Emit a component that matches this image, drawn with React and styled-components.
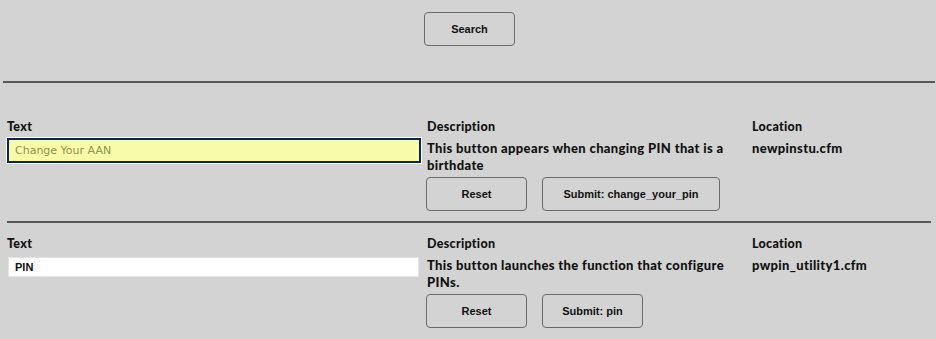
import React from "react";
import styled, { createGlobalStyle } from "styled-components";

const Global = createGlobalStyle`
  html, body { margin: 0; padding: 0; background: #d3d3d3; overflow: hidden; }
  body { font-family: "Liberation Sans", Arial, sans-serif; }
`;

const Page = styled.div`
  background: #d3d3d3;
  min-height: 339px;
  padding-top: 12px;
`;

const Top = styled.div`
  display: flex;
  justify-content: center;
  padding-left: 3px;
`;

const Button = styled.button`
  height: 34px;
  width: ${(p) => p.$w}px;
  background: #d3d3d3;
  border: 1px solid #6a6a6a;
  border-radius: 4px;
  font-family: "Liberation Sans", Arial, sans-serif;
  font-weight: bold;
  font-size: 11px;
  color: #111;
  padding: 0;
  cursor: pointer;
`;

const Rule = styled.hr`
  border: 0;
  height: 2px;
  background: #595959;
  margin: ${(p) => p.$m};
`;

const Row = styled.div`
  display: grid;
  grid-template-columns: 414px 319px 1fr;
  column-gap: 6px;
  padding: ${(p) => p.$pt}px 0 0 7px;
`;

const Col = styled.div`
  display: flex;
  flex-direction: column;
  align-items: flex-start;
  min-width: 0;
`;

const Label = styled.div`
  font-family: "Lato", "DejaVu Sans", sans-serif;
  font-weight: 900;
  font-size: 12.5px;
  letter-spacing: 0.3px;
  line-height: 16px;
  color: #111;
`;

const Desc = styled.div`
  font-family: "Lato", "DejaVu Sans", sans-serif;
  font-weight: 900;
  font-size: 13px;
  letter-spacing: 0.35px;
  line-height: 17px;
  color: #111;
  margin-top: 5px;
`;

const Buttons = styled.div`
  display: flex;
  gap: 15px;
  margin: 3px 0 0 -1px;
`;

const Input = styled.input`
  box-sizing: border-box;
  width: ${(p) => (p.$focus ? 414 : 411)}px;
  height: ${(p) => (p.$focus ? 25 : 20)}px;
  margin: ${(p) => (p.$focus ? "3px 0 0 0" : "5px 0 0 1px")};
  background: ${(p) => (p.$focus ? "#f8fca8" : "#ffffff")};
  border: ${(p) => (p.$focus ? "2px solid #0d2550" : "1px solid #e2e2e2")};
  box-shadow: ${(p) => (p.$focus ? "0 0 0 1px #ffffff" : "none")};
  outline: none;
  padding: 0 0 0 6px;
  font-family: ${(p) => (p.$focus ? '"DejaVu Sans", Verdana, sans-serif' : '"Liberation Sans", Arial, sans-serif')};
  font-weight: ${(p) => (p.$focus ? "normal" : "bold")};
  font-size: 11px;
  color: #111;
  &::placeholder { color: #8e9350; }
`;

const rows = [
  {
    pt: 36,
    focus: true,
    placeholder: "Change Your AAN",
    value: "",
    desc: "This button appears when changing PIN that is a birthdate",
    submit: "Submit: change_your_pin",
    sw: 178,
    loc: "newpinstu.cfm",
  },
  {
    pt: 13,
    focus: false,
    value: "PIN",
    desc: "This button launches the function that configure PINs.",
    submit: "Submit: pin",
    sw: 101,
    loc: "pwpin_utility1.cfm",
  },
];

export default function App() {
  return (
    <Page>
      <Global />
      <Top>
        <Button $w={91}>Search</Button>
      </Top>
      <Rule $m="35px 1px 0 3px" />
      {rows.map((r, i) => (
        <React.Fragment key={i}>
          <Row $pt={r.pt}>
            <Col>
              <Label>Text</Label>
              <Input
                $focus={r.focus}
                placeholder={r.placeholder}
                defaultValue={r.value}
                readOnly
              />
            </Col>
            <Col>
              <Label>Description</Label>
              <Desc>{r.desc}</Desc>
              <Buttons>
                <Button $w={101}>Reset</Button>
                <Button $w={r.sw}>{r.submit}</Button>
              </Buttons>
            </Col>
            <Col>
              <Label>Location</Label>
              <Desc>{r.loc}</Desc>
            </Col>
          </Row>
          {i === 0 && <Rule $m="10px 5px 0 7px" />}
        </React.Fragment>
      ))}
    </Page>
  );
}
